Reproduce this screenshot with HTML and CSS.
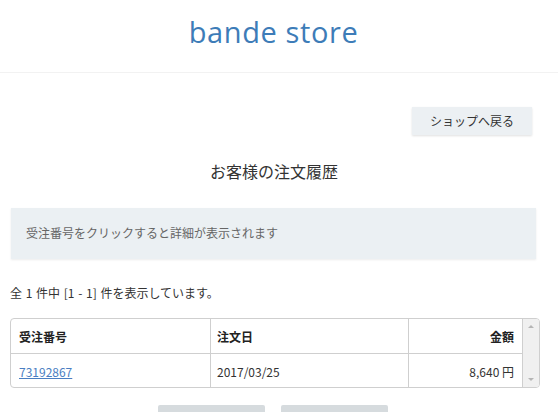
FILE: index.html
```html
<!DOCTYPE html>
<html lang="ja">
<head>
    <meta charset="UTF-8">
    <meta name="viewport" content="width=device-width, initial-scale=1.0">
    <title>bande store - お客様の注文履歴</title>
    <link rel="stylesheet" href="styles.css">
</head>
<body>
    <header class="site-header">
        <h1 class="site-title">bande store</h1>
    </header>

    <main class="page">
        <div class="toolbar">
            <a class="btn-back" href="#">ショップへ戻る</a>
        </div>

        <h2 class="page-title">お客様の注文履歴</h2>

        <div class="notice">受注番号をクリックすると詳細が表示されます</div>

        <p class="result-count">全 1 件中 [1 - 1] 件を表示しています。</p>

        <div class="table-wrap">
            <table class="order-table">
                <thead>
                    <tr>
                        <th class="col-no">受注番号</th>
                        <th class="col-date">注文日</th>
                        <th class="col-price">金額</th>
                    </tr>
                </thead>
                <tbody>
                    <tr>
                        <td class="col-no"><a href="#">73192867</a></td>
                        <td class="col-date">2017/03/25</td>
                        <td class="col-price">8,640&nbsp;円</td>
                    </tr>
                </tbody>
            </table>
            <div class="scrollbar">
                <span class="arrow arrow-up"></span>
                <span class="arrow arrow-down"></span>
            </div>
        </div>

        <div class="pager">
            <span class="pager-btn"></span>
            <span class="pager-btn"></span>
        </div>
    </main>
</body>
</html>
```

FILE: styles.css
```css
body {
    margin: 0;
    font-family: "Noto Sans CJK JP", "Noto Sans", sans-serif;
    font-size: 12px;
    color: #333;
    background: #fff;
    overflow: hidden;
}

.site-header {
    height: 72px;
    padding-right: 11px;
    border-bottom: 1px solid #f2f2f2;
    display: flex;
    justify-content: center;
}

.site-title {
    margin: 12px 0 0;
    font-family: "Open Sans", "Noto Sans", sans-serif;
    font-weight: normal;
    font-size: 29px;
    line-height: 40px;
    color: #3d7cb8;
    letter-spacing: 0.6px;
}

.page {
    width: 528px;
    margin-left: 10px;
}

.toolbar {
    display: flex;
    justify-content: flex-end;
    padding: 34px 6px 0 0;
}

.btn-back {
    display: block;
    width: 120px;
    height: 28px;
    line-height: 28px;
    text-align: center;
    background-color: #ecf0f3;
    color: #333;
    text-decoration: none;
    font-size: 12px;
    box-shadow: 0 1px 2px rgba(0, 0, 0, 0.12);
}

.page-title {
    margin: 24px 0 0;
    text-align: center;
    font-size: 16px;
    font-weight: normal;
    line-height: 24px;
    color: #333;
}

.notice {
    margin-top: 25px;
    margin-left: 1px;
    width: 525px;
    height: 51px;
    line-height: 49px;
    padding-left: 15px;
    box-sizing: border-box;
    background-color: #ebf0f3;
    color: #666;
    font-size: 12px;
    box-shadow: 0 1px 2px rgba(0, 0, 0, 0.08);
}

.result-count {
    margin: 25px 0 0;
    line-height: 18px;
    font-size: 12px;
    color: #333;
    word-spacing: 1px;
}

.table-wrap {
    margin-top: 16px;
    width: 530px;
    height: 70px;
    display: flex;
    border: 1px solid #cfcfcf;
    border-radius: 4px;
    box-sizing: border-box;
    overflow: hidden;
}

.order-table {
    flex: 1;
    border-collapse: collapse;
    font-size: 12px;
}

.order-table th,
.order-table td {
    border: 1px solid #cfcfcf;
    padding: 0 8px;
    height: 34px;
    text-align: left;
}

.order-table tr:first-child th {
    border-top: none;
}

.order-table th:first-child,
.order-table td:first-child {
    border-left: none;
}

.order-table tbody tr:last-child td {
    border-bottom: none;
}

.order-table th {
    font-weight: bold;
    color: #222;
}

.order-table .col-no {
    width: 183px;
}

.order-table .col-date {
    width: 183px;
    padding-left: 6px;
}

.order-table .col-price {
    text-align: right;
}

.order-table a {
    color: #4a7ec2;
    text-decoration: underline;
}

.scrollbar {
    width: 16px;
    background-color: #f0f0f0;
    display: flex;
    flex-direction: column;
    justify-content: space-between;
    align-items: center;
    padding: 6px 0;
    box-sizing: border-box;
}

.arrow {
    width: 0;
    height: 0;
    border-left: 3px solid transparent;
    border-right: 3px solid transparent;
}

.arrow-up {
    border-bottom: 3px solid #b5b5b5;
}

.arrow-down {
    border-top: 3px solid #b5b5b5;
}

.pager {
    display: flex;
    gap: 16px;
    margin-top: 17px;
    padding-left: 148px;
}

.pager-btn {
    width: 107px;
    height: 20px;
    background-color: #d6dbde;
    border-radius: 2px 2px 0 0;
}
```
